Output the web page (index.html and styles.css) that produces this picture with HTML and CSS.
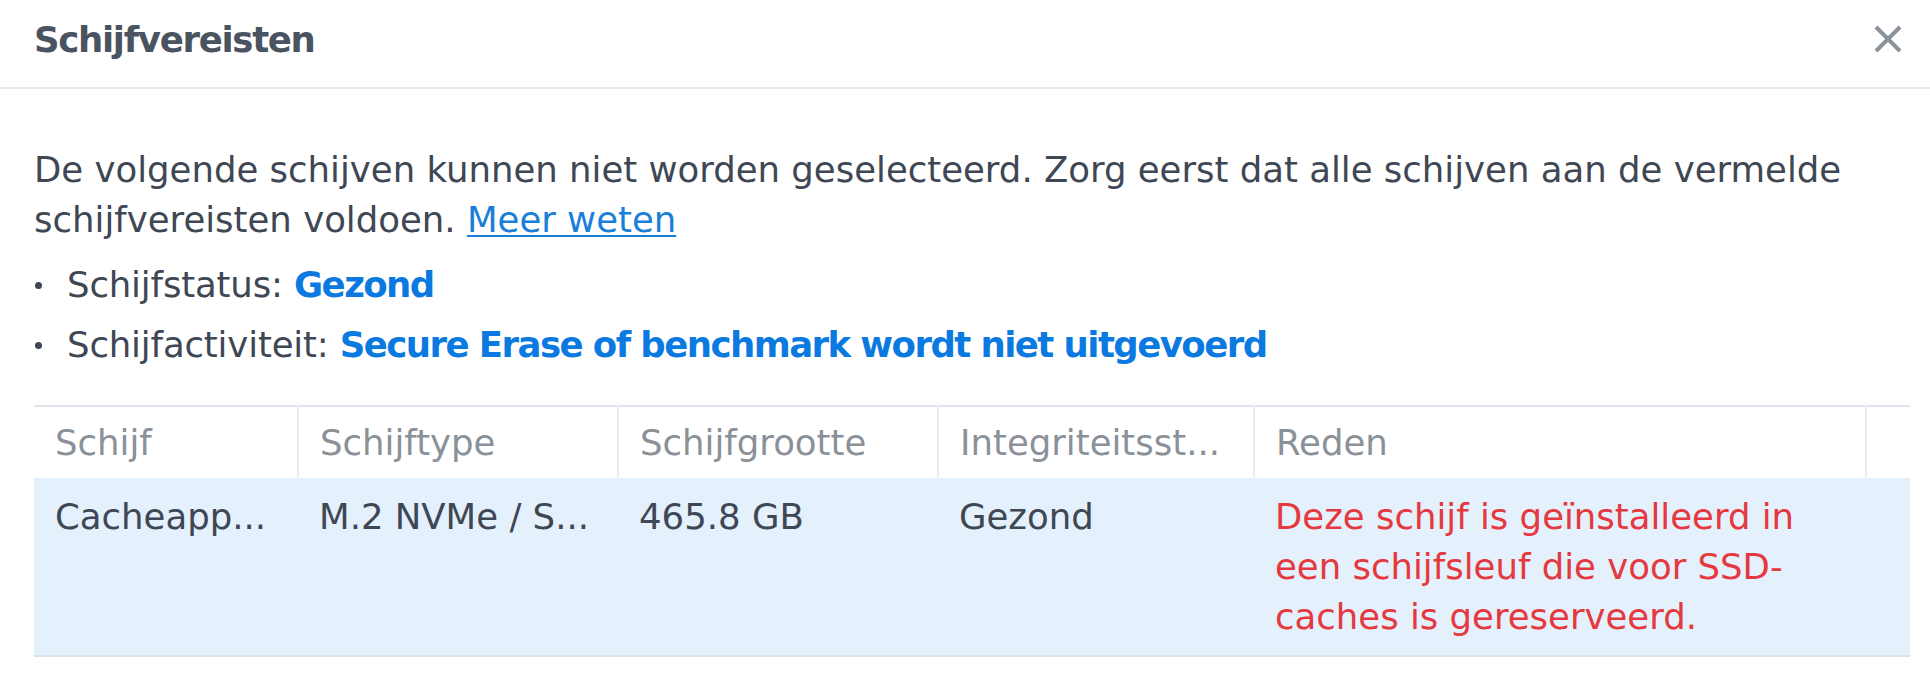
FILE: index.html
```html
<!DOCTYPE html>
<html lang="nl">
<head>
<meta charset="utf-8">
<title>Schijfvereisten</title>
<link rel="stylesheet" href="styles.css">
</head>
<body>
<div class="dialog">
  <header class="dlg-head">
    <h1 class="dlg-title">Schijfvereisten</h1>
    <button class="dlg-close" type="button" aria-label="Sluiten">
      <svg viewBox="0 0 28 28" width="28" height="28"><path d="M2 2 L26 26 M26 2 L2 26" stroke="#8b9299" stroke-width="4" fill="none"/></svg>
    </button>
  </header>
  <div class="dlg-body">
    <p class="intro">De volgende schijven kunnen niet worden geselecteerd. Zorg eerst dat alle schijven aan de vermelde schijfvereisten voldoen. <a class="link" href="#">Meer weten</a></p>
    <ul class="reqs">
      <li><span>Schijfstatus: <strong class="ok">Gezond</strong></span></li>
      <li><span>Schijfactiviteit: <strong class="ok">Secure Erase of benchmark wordt niet uitgevoerd</strong></span></li>
    </ul>
    <table class="grid">
      <colgroup>
        <col class="c1"><col class="c2"><col class="c3"><col class="c4"><col class="c5"><col class="c6">
      </colgroup>
      <thead>
        <tr><th>Schijf</th><th>Schijftype</th><th>Schijfgrootte</th><th>Integriteitsst...</th><th>Reden</th><th></th></tr>
      </thead>
      <tbody>
        <tr>
          <td>Cacheapp...</td>
          <td>M.2 NVMe / S...</td>
          <td>465.8 GB</td>
          <td>Gezond</td>
          <td class="reason">Deze schijf is geïnstalleerd in een schijfsleuf die voor SSD-caches is gereserveerd.</td>
          <td></td>
        </tr>
      </tbody>
    </table>
  </div>
</div>
</body>
</html>
```
FILE: styles.css
```css
html, body {
  margin: 0;
  padding: 0;
  background: #ffffff;
}
body {
  font-family: "DejaVu Sans", Verdana, sans-serif;
  font-size: 35.5px;
  color: #3e4753;
}
.dialog {
  width: 1930px;
}
.dlg-head {
  display: flex;
  align-items: center;
  justify-content: space-between;
  height: 89px;
  padding: 0 28px 0 34px;
  box-sizing: border-box;
  border-bottom: 2px solid #e4e9ef;
}
.dlg-title {
  margin: 0;
  font-size: 35.5px;
  letter-spacing: -1.3px;
  font-weight: bold;
  color: #4a5360;
  padding-bottom: 8px;
}
.dlg-close {
  border: 0;
  background: none;
  padding: 0;
  width: 28px;
  height: 28px;
  display: flex;
  margin-bottom: 10px;
}
.dlg-body {
  padding: 56px 20px 0 34px;
}
.intro {
  margin: 0;
  line-height: 50px;
}
.link {
  color: #1a7fd8;
  text-decoration: underline;
  text-decoration-thickness: 2px;
  text-underline-offset: 3px;
}
.reqs {
  list-style: none;
  margin: 15px 0 0;
  padding: 0;
  display: flex;
  flex-direction: column;
  gap: 10px;
}
.reqs li {
  display: flex;
  align-items: center;
  line-height: 50px;
}
.reqs li::before {
  content: "";
  width: 7px;
  height: 7px;
  border-radius: 50%;
  background: #3e4753;
  margin: 0 25px 0 1px;
  flex: none;
}
.reqs li > span {
  letter-spacing: -0.15px;
}
.ok {
  color: #0b7ae0;
  font-weight: bold;
  letter-spacing: -1.55px;
}
.grid {
  margin-top: 35px;
  width: 1876px;
  table-layout: fixed;
  border-collapse: collapse;
  border-top: 2px solid #dde4ec;
}
.c1 { width: 264px; }
.c2 { width: 320px; }
.c3 { width: 320px; }
.c4 { width: 316px; }
.c5 { width: 612px; }
.c6 { width: 44px; }
.grid th {
  height: 71px;
  padding: 0 21px;
  text-align: left;
  font-weight: normal;
  color: #8a9199;
  line-height: 50px;
  white-space: nowrap;
  overflow: hidden;
  border-left: 2px solid #e8edf2;
}
.grid th:first-child {
  border-left: 0;
}
.grid tbody tr {
  background: #e4f0fc;
  border-bottom: 2px solid #d9e2eb;
}
.grid td {
  padding: 14px 21px 13px;
  line-height: 50px;
  vertical-align: top;
  color: #3e4753;
}
.grid td.reason {
  color: #e5383f;
}
```
